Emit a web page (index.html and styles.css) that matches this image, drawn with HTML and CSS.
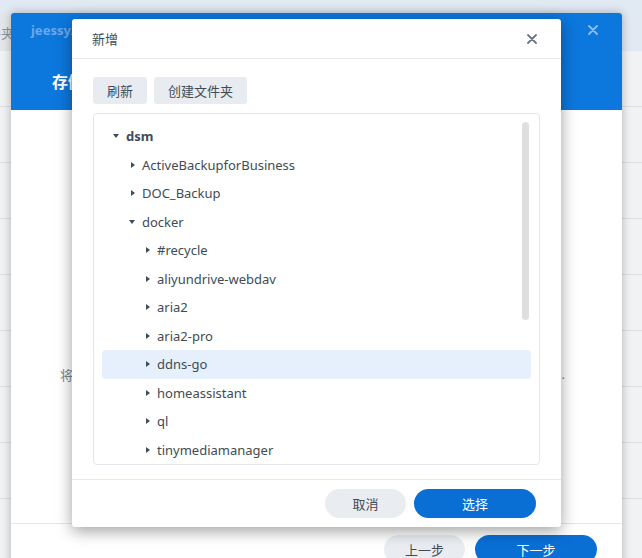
FILE: index.html
```html
<!DOCTYPE html>
<html lang="zh-CN">
<head>
    <meta charset="UTF-8">
    <meta name="viewport" content="width=device-width, initial-scale=1.0">
    <title>新增</title>
    <link rel="stylesheet" href="styles.css">
</head>
<body>
    <!-- page behind the windows -->
    <div class="desk">
        <div class="topbar">
            <div class="tab">共享文件夹</div>
        </div>
        <div class="list">
            <div class="list-row"></div>
            <div class="list-row"></div>
            <div class="list-row"></div>
            <div class="list-row"></div>
            <div class="list-row"></div>
            <div class="list-row"></div>
            <div class="list-row"></div>
            <div class="list-row"></div>
        </div>
    </div>

    <!-- wizard window -->
    <div class="window">
        <div class="win-head">
            <div class="win-top">
                <span class="win-title">jeessy/ddns-go</span>
                <svg class="win-close" width="10" height="10" viewBox="0 0 10 10">
                    <path d="M1 1L9 9M9 1L1 9" stroke="currentColor" stroke-width="1.8" stroke-linecap="round"/>
                </svg>
            </div>
            <div class="win-sub">存储空间设置</div>
        </div>
        <div class="win-body">
            <p class="hint"><span>将本地文件夹挂载到容器中的路径</span><span>.</span></p>
        </div>
        <div class="win-foot">
            <button class="btn">上一步</button>
            <button class="btn primary wide">下一步</button>
        </div>
    </div>

    <!-- folder picker dialog -->
    <div class="dialog">
        <div class="dlg-head">
            <span class="dlg-title">新增</span>
            <svg class="dlg-close" width="10" height="10" viewBox="0 0 10 10">
                <path d="M1 1L9 9M9 1L1 9" stroke="currentColor" stroke-width="1.8" stroke-linecap="round"/>
            </svg>
        </div>
        <div class="toolbar">
            <button class="tool">刷新</button>
            <button class="tool">创建文件夹</button>
        </div>
        <div class="tree">
            <div class="node l0 bold"><i class="caret open"></i>dsm</div>
            <div class="node l1"><i class="caret"></i>ActiveBackupforBusiness</div>
            <div class="node l1"><i class="caret"></i>DOC_Backup</div>
            <div class="node l1"><i class="caret open"></i>docker</div>
            <div class="node l2"><i class="caret"></i>#recycle</div>
            <div class="node l2"><i class="caret"></i>aliyundrive-webdav</div>
            <div class="node l2"><i class="caret"></i>aria2</div>
            <div class="node l2"><i class="caret"></i>aria2-pro</div>
            <div class="node l2 selected"><i class="caret"></i>ddns-go</div>
            <div class="node l2"><i class="caret"></i>homeassistant</div>
            <div class="node l2"><i class="caret"></i>ql</div>
            <div class="node l2"><i class="caret"></i>tinymediamanager</div>
            <div class="scrollbar"></div>
        </div>
        <div class="dlg-foot">
            <button class="btn">取消</button>
            <button class="btn primary wide">选择</button>
        </div>
    </div>
</body>
</html>
```

FILE: styles.css
```css
* {
    margin: 0;
    padding: 0;
    box-sizing: border-box;
}

body {
    position: relative;
    width: 642px;
    height: 558px;
    overflow: hidden;
    background: #f1f2f4;
    font-family: "Noto Sans", "Noto Sans CJK SC", sans-serif;
    font-size: 13px;
    color: #414b55;
}

button {
    font-family: inherit;
    font-size: 13px;
    border: none;
    cursor: pointer;
}

/* background page */
.topbar {
    height: 51px;
    padding-top: 13px;
    background: #e1e9f2;
}

.tab {
    display: flex;
    justify-content: flex-end;
    align-items: center;
    width: 14px;
    height: 38px;
    overflow: hidden;
    white-space: nowrap;
    background: #e4e6e9;
    color: #8b939b;
}

.list-row {
    height: 56px;
    border-bottom: 1px solid #dcdfe3;
}

/* wizard window */
.window {
    position: absolute;
    left: 11px;
    top: 13px;
    width: 611px;
    height: 560px;
    display: flex;
    flex-direction: column;
    background: #fff;
    border-radius: 3px 3px 0 0;
    box-shadow: 0 0 10px rgba(0, 0, 0, 0.28);
}

.win-head {
    height: 97px;
    background: #0c77dc;
    border-radius: 3px 3px 0 0;
}

.win-top {
    display: flex;
    justify-content: space-between;
    align-items: center;
    padding: 8px 24px 0 20px;
    height: 26px;
}

.win-title {
    font-weight: bold;
    color: #6ea8e6;
}

.win-close {
    color: #8cbdf0;
}

.win-sub {
    margin-top: 30px;
    padding-left: 41px;
    font-size: 16px;
    font-weight: bold;
    color: #fff;
}

.win-body {
    height: 413px;
    padding: 255px 57px 0 49px;
}

.hint {
    display: flex;
    justify-content: space-between;
    color: #7b838b;
}

.win-foot {
    display: flex;
    justify-content: flex-end;
    gap: 10px;
    padding: 11px 25px 0;
    border-top: 1px solid #e3e6ea;
}

.btn {
    width: 81px;
    height: 29px;
    border-radius: 15px;
    background: #e9edf2;
    color: #414b55;
}

.btn.wide {
    width: 122px;
}

.btn.primary {
    background: #0a6fd5;
    color: #fff;
}

/* folder dialog */
.dialog {
    position: absolute;
    left: 72px;
    top: 19px;
    width: 489px;
    height: 508px;
    display: flex;
    flex-direction: column;
    background: #fff;
    border-radius: 3px;
    box-shadow: 0 4px 16px rgba(0, 0, 0, 0.38);
}

.dlg-head {
    display: flex;
    justify-content: space-between;
    align-items: center;
    height: 40px;
    padding: 0 24px 0 20px;
    border-bottom: 1px solid #e6e8eb;
}

.dlg-close {
    color: #6b7580;
}

.toolbar {
    display: flex;
    gap: 7px;
    margin-top: 18px;
    padding: 0 21px;
}

.tool {
    height: 27px;
    padding: 0 14px;
    border-radius: 3px;
    background: #e8ecf0;
    color: #414b55;
}

.tree {
    position: relative;
    height: 352px;
    margin: 9px 21px 0;
    padding: 8px 8px 0;
    border: 1px solid #e3e6ea;
    border-radius: 4px;
    overflow: hidden;
}

.node {
    display: flex;
    align-items: center;
    height: 28.5px;
    border-radius: 4px;
    white-space: nowrap;
}

.node.l0 { padding-left: 10px; }
.node.l1 { padding-left: 26px; }
.node.l2 { padding-left: 41px; }

.node.bold {
    font-weight: bold;
}

.node.selected {
    background: #e5f0fc;
}

.caret {
    display: flex;
    justify-content: flex-end;
    align-items: center;
    width: 7px;
    height: 10px;
    margin-right: 7px;
}

.caret::before {
    content: "";
    border-left: 4px solid #414b55;
    border-top: 3px solid transparent;
    border-bottom: 3px solid transparent;
}

.caret.open::before {
    border-top: 4px solid #414b55;
    border-left: 3px solid transparent;
    border-right: 3px solid transparent;
    border-bottom: none;
}

.scrollbar {
    position: absolute;
    top: 8px;
    right: 10px;
    width: 7px;
    height: 198px;
    border-radius: 4px;
    background: #dedfe1;
}

.dlg-foot {
    display: flex;
    justify-content: flex-end;
    align-items: center;
    gap: 8px;
    height: 48px;
    margin-top: 14px;
    padding: 0 25px;
    border-top: 1px solid #e6e8eb;
}
```
